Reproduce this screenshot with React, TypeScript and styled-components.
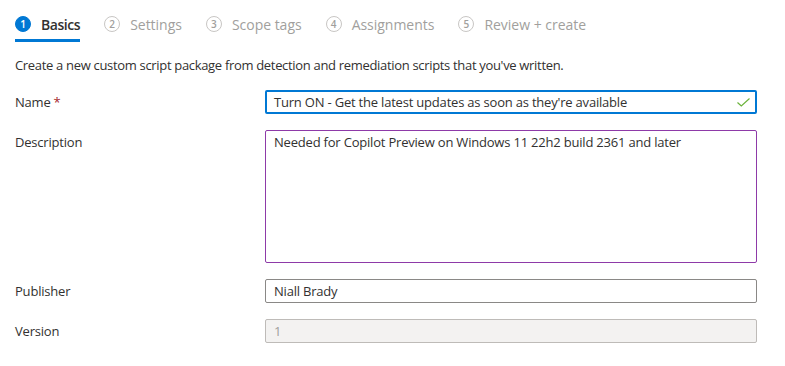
import * as React from "react";
import styled, { createGlobalStyle } from "styled-components";

const GlobalStyle = createGlobalStyle`
  html, body {
    margin: 0;
    padding: 0;
    background: #ffffff;
  }
  body {
    font-family: "Segoe UI", "Open Sans", "Liberation Sans", sans-serif;
    color: #323130;
  }
`;

const Page = styled.div`
  width: 785px;
  height: 366px;
  padding: 0 28px 0 15px;
  box-sizing: border-box;
`;

const Steps = styled.div`
  display: flex;
  gap: 24px;
  height: 42px;
`;

const Step = styled.div<{ $active?: boolean }>`
  display: flex;
  align-items: center;
  gap: 10px;
  height: 42px;
  box-sizing: border-box;
  padding-top: 9px;
  border-bottom: 3px solid ${(p) => (p.$active ? "#0078d4" : "transparent")};
  font-size: 14px;
  font-weight: ${(p) => (p.$active ? 600 : 400)};
  color: ${(p) => (p.$active ? "#323130" : "#a19f9d")};
  letter-spacing: ${(p) => (p.$active ? "-0.45px" : "-0.02px")};
`;

const StepNum = styled.span<{ $active?: boolean }>`
  width: 16px;
  height: 16px;
  border-radius: 50%;
  box-sizing: border-box;
  display: flex;
  align-items: center;
  justify-content: center;
  font-size: 10px;
  font-weight: 600;
  letter-spacing: 0;
  background: ${(p) => (p.$active ? "#0078d4" : "transparent")};
  border: 1px solid ${(p) => (p.$active ? "#0078d4" : "#c8c6c4")};
  color: ${(p) => (p.$active ? "#ffffff" : "#a19f9d")};
`;

const Intro = styled.p`
  margin: 14px 0 16px;
  font-size: 13px;
  line-height: 18px;
  letter-spacing: -0.32px;
`;

const Form = styled.div`
  display: grid;
  grid-template-columns: 250px 492px;
  row-gap: 16px;
`;

const Label = styled.label`
  font-size: 13px;
  line-height: 18px;
  padding-top: 3px;
  letter-spacing: -0.2px;
`;

const Required = styled.span`
  color: #a4262c;
  margin-left: 3px;
`;

const Field = styled.div<{ $variant?: "focus" | "hover" | "plain" | "disabled"; $tall?: boolean }>`
  position: relative;
  box-sizing: border-box;
  height: ${(p) => (p.$tall ? "133px" : "24px")};
  border-radius: 2px;
  padding: ${(p) => (p.$tall ? "2px 8px" : "0 8px")};
  display: flex;
  align-items: ${(p) => (p.$tall ? "flex-start" : "center")};
  font-size: 13px;
  line-height: 18px;
  letter-spacing: -0.2px;
  border: ${(p) =>
    p.$variant === "focus"
      ? "2px solid #0078d4"
      : p.$variant === "hover"
      ? "1px solid #8e3aa8"
      : p.$variant === "disabled"
      ? "1px solid #bebbb8"
      : "1px solid #8a8886"};
  padding-left: ${(p) => (p.$variant === "focus" ? "7px" : "8px")};
  background: ${(p) => (p.$variant === "disabled" ? "#f3f2f1" : "#ffffff")};
  color: ${(p) => (p.$variant === "disabled" ? "#a19f9d" : "#323130")};
`;

const Check = styled.svg`
  position: absolute;
  right: 5px;
  top: 6px;
`;

const steps = ["Basics", "Settings", "Scope tags", "Assignments", "Review + create"];

export default function App() {
  return (
    <Page>
      <GlobalStyle />
      <Steps>
        {steps.map((s, i) => (
          <Step key={s} $active={i === 0}>
            <StepNum $active={i === 0}>{i + 1}</StepNum>
            {s}
          </Step>
        ))}
      </Steps>
      <Intro>
        Create a new custom script package from detection and remediation scripts that you've written.
      </Intro>
      <Form>
        <Label>
          Name<Required>*</Required>
        </Label>
        <Field $variant="focus">
          Turn ON - Get the latest updates as soon as they're available
          <Check width="13" height="9" viewBox="0 0 13 9">
            <path d="M0.5 4.5 L4.3 8 L12.5 0.5" fill="none" stroke="#6bb33b" strokeWidth="1.2" />
          </Check>
        </Field>
        <Label>Description</Label>
        <Field $variant="hover" $tall>
          Needed for Copilot Preview on Windows 11 22h2 build 2361 and later
        </Field>
        <Label>Publisher</Label>
        <Field $variant="plain">Niall Brady</Field>
        <Label>Version</Label>
        <Field $variant="disabled">1</Field>
      </Form>
    </Page>
  );
}
